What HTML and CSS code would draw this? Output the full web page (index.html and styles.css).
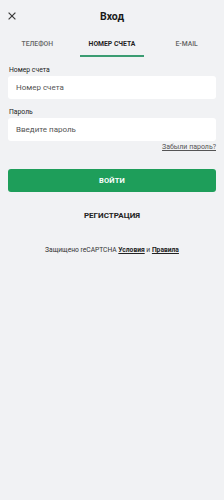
FILE: index.html
```html
<!DOCTYPE html>
<html lang="ru">
<head>
<meta charset="utf-8">
<title>Вход</title>
<link rel="stylesheet" href="styles.css">
</head>
<body>
<div class="page">
  <header class="header">
    <button class="close" aria-label="Закрыть">
      <svg width="8" height="8" viewBox="0 0 8 8"><path d="M0.6 0.6 L7.4 7.4 M7.4 0.6 L0.6 7.4" stroke="#3a3a3a" stroke-width="1.2" fill="none"/></svg>
    </button>
    <h1 class="title">Вход</h1>
  </header>
  <nav class="tabs">
    <div class="tab">ТЕЛЕФОН</div>
    <div class="tab active">НОМЕР СЧЕТА</div>
    <div class="tab">E-MAIL</div>
  </nav>
  <form class="form">
    <label class="label">Номер счета</label>
    <div class="input">Номер счета</div>
    <label class="label second">Пароль</label>
    <div class="input">Введите пароль</div>
    <div class="forgot-row"><a class="forgot">Забыли пароль?</a></div>
    <div class="btn">ВОЙТИ</div>
    <div class="register">РЕГИСТРАЦИЯ</div>
    <p class="captcha">Защищено reCAPTCHA <a class="strong">Условия</a> и <a class="strong">Правила</a></p>
  </form>
</div>
</body>
</html>
```
FILE: styles.css
```css
* { box-sizing: border-box; }
html, body { margin: 0; padding: 0; }
body {
  background: #f1f2f4;
  font-family: Roboto, "Liberation Sans", sans-serif;
  color: #222;
  width: 224px;
  height: 500px;
}
.header {
  position: relative;
  height: 32px;
  display: flex;
  align-items: center;
  justify-content: center;
}
.close {
  position: absolute;
  left: 8px;
  top: 12px;
  width: 8px;
  height: 8px;
  padding: 0;
  border: 0;
  background: none;
  display: flex;
}
.title {
  margin: 0;
  font-size: 10.5px;
  font-weight: 700;
  color: #1a1a1a;
  line-height: 12px;
  padding-top: 1px;
}
.tabs {
  display: grid;
  grid-template-columns: 1fr 1fr 1fr;
  height: 25px;
}
.tab {
  margin: 0 5.5px;
  display: flex;
  align-items: center;
  justify-content: center;
  font-size: 6.8px;
  font-weight: 500;
  color: #666;
  border-bottom: 2px solid transparent;
}
.tab.active {
  color: #1f1f1f;
  font-weight: 700;
  border-bottom-color: #3b9c72;
}
.form {
  margin: 0;
  padding: 9px 8px 0 8px;
  display: flex;
  flex-direction: column;
}
.label {
  display: block;
  font-size: 6.8px;
  line-height: 8px;
  color: #222;
  padding-left: 1px;
  margin-bottom: 2px;
}
.label.second { margin-top: 9px; }
.input {
  height: 23px;
  background: #fff;
  border-radius: 3px;
  font-size: 8px;
  color: #555;
  display: flex;
  align-items: center;
  padding-left: 8px;
}
.forgot-row {
  display: flex;
  justify-content: flex-end;
  margin-top: 2px;
  line-height: 8px;
}
.forgot {
  font-size: 7px;
  color: #555;
  text-decoration: underline;
}
.btn {
  margin-top: 18px;
  height: 23px;
  background: #1e9e5a;
  border-radius: 3px;
  color: #fff;
  font-size: 7.5px;
  font-weight: 700;
  display: flex;
  align-items: center;
  justify-content: center;
  letter-spacing: 0.2px;
}
.register {
  margin-top: 19px;
  text-align: center;
  font-size: 8px;
  font-weight: 700;
  color: #222;
  line-height: 10px;
}
.captcha {
  margin: 25px 0 0 0;
  text-align: center;
  font-size: 6.7px;
  color: #333;
  line-height: 8px;
}
.strong {
  font-weight: 700;
  color: #222;
  text-decoration: underline;
}
```
